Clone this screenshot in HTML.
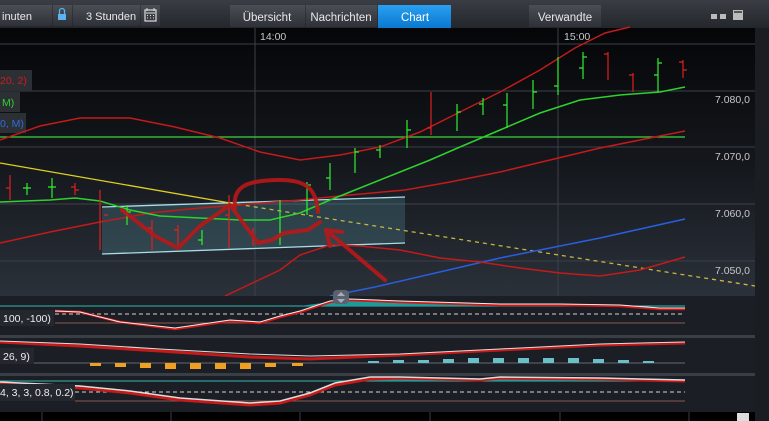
<!DOCTYPE html>
<html><head><meta charset="utf-8"><style>
body{margin:0;width:769px;height:421px;overflow:hidden;background:#000;font-family:"Liberation Sans",sans-serif}
svg{display:block}
text{font-family:"Liberation Sans",sans-serif}
</style></head><body>
<svg width="769" height="421" viewBox="0 0 769 421" xmlns="http://www.w3.org/2000/svg">
<defs>
<linearGradient id="bg" x1="0" y1="0" x2="0" y2="1"><stop offset="0" stop-color="#050608"/><stop offset="0.5" stop-color="#14171c"/><stop offset="1" stop-color="#2b313a"/></linearGradient>
<linearGradient id="tb" x1="0" y1="0" x2="0" y2="1"><stop offset="0" stop-color="#3a3e44"/><stop offset="1" stop-color="#23262b"/></linearGradient>
<linearGradient id="btn" x1="0" y1="0" x2="0" y2="1"><stop offset="0" stop-color="#4a4e55"/><stop offset="1" stop-color="#2e3137"/></linearGradient>
<linearGradient id="blue" x1="0" y1="0" x2="0" y2="1"><stop offset="0" stop-color="#2aa0f0"/><stop offset="1" stop-color="#0a78d0"/></linearGradient>
</defs>
<!-- toolbar -->
<rect x="0" y="0" width="769" height="28" fill="url(#tb)"/>
<rect x="0" y="5" width="52" height="21" fill="url(#btn)"/>
<text x="2" y="20" fill="#e8e8e8" font-size="11">inuten</text>
<rect x="53" y="5" width="19" height="21" fill="url(#btn)"/>
<rect x="58" y="14" width="8" height="6" fill="#5ab4f0"/><path d="M59.5 14v-3a2.5 2.5 0 0 1 5 0v3" stroke="#5ab4f0" fill="none" stroke-width="1.3"/>
<rect x="73" y="5" width="67" height="21" fill="url(#btn)"/>
<text x="86" y="20" fill="#e8e8e8" font-size="11">3 Stunden</text>
<rect x="141" y="5" width="19" height="21" fill="url(#btn)"/>
<rect x="145" y="10" width="11" height="11" fill="none" stroke="#ddd" stroke-width="1.2"/><path d="M146 13h9M147 15.5h1M150 15.5h1M153 15.5h1M147 18h1M150 18h1M153 18h1M147 8v3M154 8v3" stroke="#ddd"/>
<rect x="230" y="5" width="75" height="22" fill="url(#btn)"/>
<text x="267" y="21" fill="#e8e8e8" font-size="11.5" text-anchor="middle">Übersicht</text>
<rect x="306" y="5" width="71" height="22" fill="url(#btn)"/>
<text x="341" y="21" fill="#e8e8e8" font-size="11.5" text-anchor="middle">Nachrichten</text>
<rect x="378" y="5" width="73" height="23" fill="url(#blue)"/>
<text x="415" y="21" fill="#fff" font-size="11.5" text-anchor="middle">Chart</text>
<rect x="529" y="5" width="72" height="22" fill="url(#btn)"/>
<text x="565" y="21" fill="#e8e8e8" font-size="11.5" text-anchor="middle">Verwandte</text>
<rect x="711" y="14" width="6" height="5" fill="#bbb"/><rect x="720" y="14" width="6" height="5" fill="#bbb"/><rect x="733" y="10" width="10" height="10" fill="#bbb"/><rect x="734" y="11" width="8" height="2" fill="#555"/>
<!-- chart bg -->
<rect x="0" y="28" width="755" height="268" fill="url(#bg)"/>
<rect x="755" y="28" width="14" height="393" fill="#1a1d22"/>
<g stroke="#3c4048" stroke-width="1">
<path d="M255 28V296M558 28V296M0 44H755M0 91H755M0 147H755M0 204H755M0 261H755"/>
</g>
<text x="260" y="40" fill="#c8c8c8" font-size="10.5">14:00</text>
<text x="564" y="40" fill="#c8c8c8" font-size="10.5">15:00</text>
<g fill="#c8c8c8" font-size="10.5" text-anchor="end">
<text x="750" y="103">7.080,0</text><text x="750" y="160">7.070,0</text><text x="750" y="217">7.060,0</text><text x="750" y="274">7.050,0</text>
</g>
<!-- legend boxes -->
<rect x="0" y="70" width="32" height="21" fill="#2c2f34"/><text x="0" y="84" fill="#cc1e1e" font-size="10.5">20, 2)</text>
<rect x="0" y="92" width="20" height="20" fill="#2c2f34"/><text x="2" y="106" fill="#2ed12e" font-size="10.5">M)</text>
<rect x="0" y="113" width="26" height="20" fill="#2c2f34"/><text x="0" y="127" fill="#2a6ee0" font-size="10.5">0, M)</text>
<!-- rectangle -->
<polygon points="102,207 405,197 405,243 102,254" fill="#5aa0b0" fill-opacity="0.25"/>
<path d="M102 207L405 197M102 254L405 243" stroke="#a8dde8" stroke-width="1.3"/>
<!-- lines -->
<path d="M0 137H685" stroke="#3ed43e" stroke-width="1.3"/>
<path d="M0 163L230 203" stroke="#e0d020" stroke-width="1.3"/>
<path d="M230 203L755 286" stroke="#c8b840" stroke-width="1.3" stroke-dasharray="4 4"/>
<path d="M330 296L375 287L500 258L600 238L685 219" stroke="#2a5ee0" stroke-width="1.5" fill="none"/>
<g fill="none" stroke="#c41a1a" stroke-width="1.5">
<path d="M0 140L40 126L80 118L130 118L175 127L220 138L260 152L300 160L340 155L380 147L420 132L460 112L500 92L540 70L575 48L605 33L630 27"/>
<path d="M0 243L50 232L100 222L150 213L200 208L250 204L300 200L350 195L405 190L450 182L500 172L550 160L600 148L650 138L685 131"/>
<path d="M225 296L280 270L300 255L330 245L360 246L400 250L440 258L480 262L520 268L560 273L600 276L640 270L685 257"/>
</g>
<path d="M0 202L50 200L75 198L100 201L130 210L160 216L200 218L240 220L270 220L300 213L330 200L360 188L400 172L430 160L460 147L500 130L540 113L580 100L620 95L660 92L685 87" stroke="#2ed12e" stroke-width="1.5" fill="none"/>
<!-- bars -->
<g stroke-width="1.2">
<g stroke="#e02020"><path d="M10 175V200M6 188h4M75 183V195M71 187h4M75 190h4M100 190V250M104 215h4M152 220V250M148 228h4M178 225V245M174 230h4M229 195V248M225 215h4M253 228V246M249 232h4M431 92V135M427 128h4M608 52V80M604 54h4M633 73V92M629 75h4M683 60V78M679 62h4M683 70h4"/></g>
<g stroke="#2ef02e"><path d="M27 183V195M23 188h8M52 178V198M48 187h8M127 205V225M127 212h4M202 230V245M198 240h4M280 200V245M307 182V215M307 185h4M330 163V190M326 178h4M355 148V173M355 152h4M380 145V158M376 150h4M407 120V148M407 130h4M457 104V131M457 112h4M483 98V115M479 104h4M507 93V128M503 105h4M533 80V109M533 92h4M558 57V95M554 86h4M583 52V79M579 68h4M583 57h4M658 58V92M654 75h4M658 63h4"/></g>
</g>
<!-- hand drawn -->
<g fill="none" stroke="#b81818" stroke-width="4" stroke-linecap="round" stroke-linejoin="round" opacity="0.9">
<path d="M235 208C232 186 248 180 280 180C308 180 316 190 318 212"/>
<path d="M122 210L155 236L178 248L200 226L230 205L258 243L272 240L284 233L308 230L320 222"/>
<path d="M326 230L385 280M326 230L342 232M326 230L330 246"/>
</g>
<!-- panels -->
<rect x="0" y="296" width="755" height="116" fill="#1b1f25"/>
<rect x="0" y="335" width="755" height="3" fill="#3a3f46"/>
<rect x="0" y="373" width="755" height="3" fill="#3a3f46"/>
<!-- panel1 -->
<path d="M0 306H685" stroke="#2fb8b0" stroke-width="1"/>
<path d="M55 314H685" stroke="#d0d0d0" stroke-dasharray="4 3"/>
<path d="M55 323H685" stroke="#8a5a50"/>
<path d="M300 306L330 302L350 300L400 302L500 305L560 305L620 306L300 306Z" fill="#1e9a98"/>
<path d="M55 311L80 312L120 322L175 329L230 321L260 323L280 317L300 312L330 302L350 300L400 302L500 305L560 305L620 306L660 309L685 309" stroke="#d01818" stroke-width="2.5" fill="none"/>
<path d="M55 311L80 312L120 322L175 328L230 320L260 322L280 316L300 311L330 301L350 299L400 301L500 304L560 304L620 305L660 308L685 308" stroke="#eee" stroke-width="1" fill="none"/>
<rect x="0" y="310" width="54" height="16" fill="#24282e"/>
<text x="3" y="322" fill="#eee" font-size="10.5">100, -100)</text>
<rect x="333" y="290" width="16" height="14" rx="4" fill="#5a6270"/><path d="M337 296l4-4 4 4M337 299l4 4 4-4" fill="#aab" stroke="none"/>
<!-- panel2 -->
<path d="M0 363H685" stroke="#666a70"/>
<path d="M0 342L80 346L160 351L250 357L310 359L400 355L500 350L600 345L685 343" stroke="#c41a1a" stroke-width="3" fill="none"/>
<path d="M0 341L80 344L160 349L250 354L310 356L400 354L500 349L600 344L685 342" stroke="#ddd" stroke-width="1" fill="none"/>
<g fill="#f0a020"><rect x="90" y="363" width="11" height="3"/><rect x="115" y="363" width="11" height="4"/><rect x="140" y="363" width="11" height="5"/><rect x="165" y="363" width="11" height="6"/><rect x="190" y="363" width="11" height="6"/><rect x="215" y="363" width="11" height="6"/><rect x="240" y="363" width="11" height="6"/><rect x="265" y="363" width="11" height="4"/><rect x="292" y="363" width="11" height="3"/></g>
<g fill="#6ac0c8"><rect x="368" y="361" width="11" height="2"/><rect x="393" y="360" width="11" height="3"/><rect x="418" y="360" width="11" height="3"/><rect x="443" y="359" width="11" height="4"/><rect x="468" y="358" width="11" height="5"/><rect x="493" y="358" width="11" height="5"/><rect x="518" y="358" width="11" height="5"/><rect x="543" y="358" width="11" height="5"/><rect x="568" y="358" width="11" height="5"/><rect x="593" y="359" width="11" height="4"/><rect x="618" y="360" width="11" height="3"/><rect x="643" y="361" width="11" height="2"/></g>
<rect x="0" y="348" width="34" height="16" fill="#24282e"/>
<text x="3" y="360" fill="#eee" font-size="10.5">26, 9)</text>
<!-- panel3 -->
<path d="M0 381H685" stroke="#2fb8b0"/>
<path d="M75 392H685" stroke="#d0d0d0" stroke-dasharray="4 3"/>
<path d="M75 401H685" stroke="#8a5a50"/>
<path d="M345 381L370 379L400 378L480 380L500 378L600 379L685 381Z" fill="#1e9a98"/>
<path d="M0 383L80 388L130 393L180 400L250 405L280 403L310 395L335 385L370 379L400 378L480 380L500 378L600 379L685 381" stroke="#c41a1a" stroke-width="3" fill="none"/>
<path d="M0 382L80 386L130 391L180 398L250 403L280 401L310 393L335 383L370 377L400 377L480 379L500 377L600 378L685 380" stroke="#ddd" stroke-width="1.5" fill="none"/>
<rect x="0" y="384" width="75" height="17" fill="#24282e"/>
<text x="0" y="396" fill="#eee" font-size="10.5">4, 3, 3, 0.8, 0.2)</text>
<!-- bottom -->
<rect x="0" y="412" width="755" height="9" fill="#000"/>
<path d="M42 412V421M171 412V421M300 412V421M430 412V421M560 412V421M689 412V421" stroke="#3a3e44"/>
<rect x="737" y="413" width="12" height="8" fill="#ddd"/>
</svg>
</body></html>
